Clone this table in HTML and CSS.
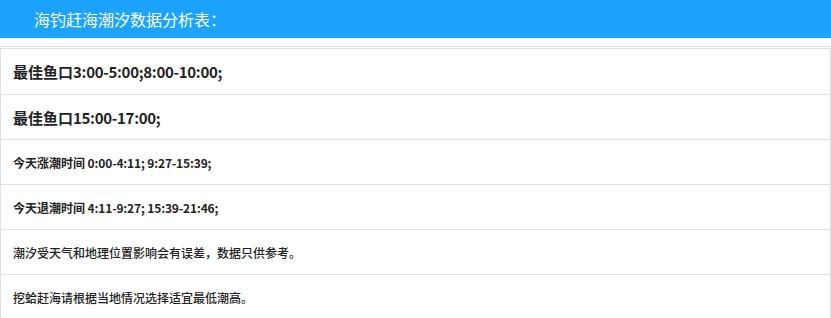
FILE: index.html
```html
<!DOCTYPE html>
<html lang="zh-CN">
<head>
<meta charset="utf-8">
<title>海钓赶海潮汐数据分析表</title>
<link rel="stylesheet" href="styles.css">
</head>
<body>
<header class="title-bar">海钓赶海潮汐数据分析表：</header>
<div class="rule"></div>
<div class="tide-table">
  <div class="row row-first big"><span>最佳鱼口</span><span class="num">3:00-5:00;8:00-10:00;</span></div>
  <div class="row big"><span>最佳鱼口</span><span class="num">15:00-17:00;</span></div>
  <div class="row small bold"><span>今天涨潮时间</span><span class="num">&nbsp;0:00-4:11; 9:27-15:39;</span></div>
  <div class="row small bold"><span>今天退潮时间</span><span class="num">&nbsp;4:11-9:27; 15:39-21:46;</span></div>
  <div class="row small">潮汐受天气和地理位置影响会有误差，数据只供参考。</div>
  <div class="row small">挖蛤赶海请根据当地情况选择适宜最低潮高。</div>
</div>
</body>
</html>
```
FILE: styles.css
```css
* { box-sizing: border-box; }
html, body {
  margin: 0;
  padding: 0;
  background: #ffffff;
  font-family: "Noto Sans CJK SC", "Noto Sans", sans-serif;
  color: #333333;
}
.title-bar {
  height: 38px;
  background: #1ca3fd;
  color: #ffffff;
  font-size: 16px;
  line-height: 38px;
  padding-left: 34px;
}
.rule {
  margin-top: 8px;
  height: 2px;
  border-top: 1px solid #e0dfe4;
}
.tide-table {
  border: 1px solid #e0dfe4;
  display: flex;
  flex-direction: column;
}
.row {
  height: 45px;
  display: flex;
  align-items: center;
  padding-left: 12px;
  border-top: 1px solid #e0dfe4;
  color: #222222;
  white-space: pre;
}
.row-first {
  border-top: none;
  height: 45px;
}
.big {
  font-size: 15px;
  font-weight: 700;
}
.big .num {
  letter-spacing: -0.3px;
}
.small {
  font-size: 12px;
  font-weight: 500;
}
.small .num {
  letter-spacing: -0.15px;
}
.bold {
  font-weight: 700;
}
```
